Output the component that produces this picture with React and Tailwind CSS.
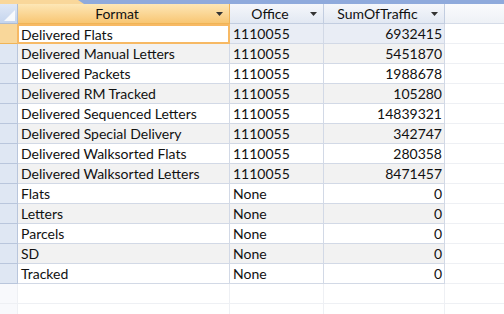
const rows = [
  ['Delivered Flats', '1110055', '6932415'],
  ['Delivered Manual Letters', '1110055', '5451870'],
  ['Delivered Packets', '1110055', '1988678'],
  ['Delivered RM Tracked', '1110055', '105280'],
  ['Delivered Sequenced Letters', '1110055', '14839321'],
  ['Delivered Special Delivery', '1110055', '342747'],
  ['Delivered Walksorted Flats', '1110055', '280358'],
  ['Delivered Walksorted Letters', '1110055', '8471457'],
  ['Flats', 'None', '0'],
  ['Letters', 'None', '0'],
  ['Parcels', 'None', '0'],
  ['SD', 'None', '0'],
  ['Tracked', 'None', '0'],
];

function Arrow() {
  return (
    <svg width="7" height="4" viewBox="0 0 7 4" className="shrink-0">
      <path d="M0 0H7L3.5 4Z" fill="#333" />
    </svg>
  );
}

export default function App() {
  return (
    <div
      className="w-[504px] h-[314px] overflow-hidden bg-white text-[14px] text-[#111] flex flex-col"
      style={{ fontFamily: 'Lato, "Open Sans", sans-serif' }}
    >
      {/* top strip */}
      <div className="h-[4px] flex shrink-0">
        <div className="w-[78px] bg-[#f9d79a]" />
        <svg width="6" height="4" viewBox="0 0 6 4" className="shrink-0">
          <rect width="6" height="4" fill="#8faadc" />
          <path d="M0 0L6 4H0Z" fill="#f9d79a" />
        </svg>
        <div className="flex-1 bg-[#8faadc]" />
      </div>

      {/* header */}
      <div className="flex h-[20px] shrink-0">
        <div className="w-[18px] border-r border-b border-[#aebcd3] bg-gradient-to-b from-[#dfe8f6] to-[#c5d5ee] flex items-end justify-end p-[2px]">
          <svg width="11" height="11" viewBox="0 0 11 11">
            <path d="M11 0V11H0Z" fill="#fff" fillOpacity="0.85" />
          </svg>
        </div>
        <div className="w-[212px] border-r border-b border-[#f0b456] bg-gradient-to-b from-[#fde7b6] to-[#f8c673] flex items-center pr-[6px]">
          <span className="flex-1 text-center">Format</span>
          <Arrow />
        </div>
        <div className="w-[94px] border-r border-b border-[#c2cde0] bg-gradient-to-b from-[#f5f7fb] to-[#e2e8f2] flex items-center pr-[6px]">
          <span className="flex-1 text-center">Office</span>
          <Arrow />
        </div>
        <div className="w-[121px] border-r border-b border-[#c2cde0] bg-gradient-to-b from-[#f5f7fb] to-[#e2e8f2] flex items-center pr-[6px]">
          <span className="flex-1 text-center">SumOfTraffic</span>
          <Arrow />
        </div>
        <div className="flex-1 border-b border-[#d5dce8] bg-gradient-to-b from-[#fafbfd] to-[#eef1f6]" />
      </div>

      {rows.map(([format, office, sum], i) => {
        const selected = i === 0;
        const bg = selected ? 'bg-[#e9edf5]' : i % 2 === 1 ? 'bg-[#f2f2f2]' : 'bg-white';
        return (
          <div key={format} className="flex h-[20px] shrink-0">
            <div
              className={
                selected
                  ? 'w-[18px] border-r border-b border-[#f0b456] bg-[#f9d79a]'
                  : 'w-[18px] border-r border-b border-[#b9c6dc] bg-[#dfe7f3]'
              }
            />
            <div
              className={
                selected
                  ? 'border-2 border-[#f7b964] bg-white flex items-center pl-[2px] -ml-[1px] w-[213px]'
                  : `w-[212px] border-r border-b border-[#d2d9e6] ${bg} flex items-center pl-[3px]`
              }
            >
              {format}
            </div>
            <div className={`w-[94px] border-r border-b border-[#d2d9e6] ${bg} flex items-center pl-[3px]`}>
              {office}
            </div>
            <div className={`w-[121px] border-r border-b border-[#d2d9e6] ${bg} flex items-center justify-end pr-[2px]`}>
              {sum}
            </div>
            <div className="flex-1 border-b border-[#eef0f4]" />
          </div>
        );
      })}

      {[0, 1].map((k) => (
        <div key={k} className="flex h-[20px] shrink-0">
          <div className="w-[18px] border-r border-b border-[#eef0f4] bg-[#f8f9fc]" />
          <div className="w-[212px] border-r border-b border-[#eef0f4]" />
          <div className="w-[94px] border-r border-b border-[#eef0f4]" />
          <div className="w-[121px] border-r border-b border-[#eef0f4]" />
          <div className="flex-1 border-b border-[#eef0f4]" />
        </div>
      ))}
    </div>
  );
}
